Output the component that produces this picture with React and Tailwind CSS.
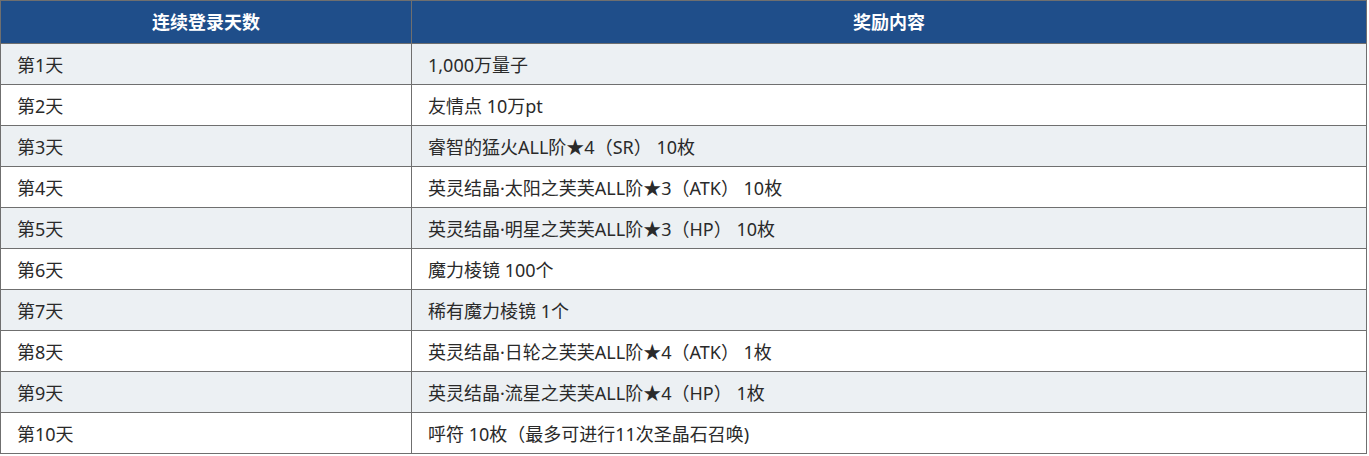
export default function App() {
  const rows = [
    ["第1天", "1,000万量子"],
    ["第2天", "友情点 10万pt"],
    ["第3天", "睿智的猛火ALL阶★4（SR） 10枚"],
    ["第4天", "英灵结晶·太阳之芙芙ALL阶★3（ATK） 10枚"],
    ["第5天", "英灵结晶·明星之芙芙ALL阶★3（HP） 10枚"],
    ["第6天", "魔力棱镜 100个"],
    ["第7天", "稀有魔力棱镜 1个"],
    ["第8天", "英灵结晶·日轮之芙芙ALL阶★4（ATK） 1枚"],
    ["第9天", "英灵结晶·流星之芙芙ALL阶★4（HP） 1枚"],
    ["第10天", "呼符 10枚（最多可进行11次圣晶石召唤)"],
  ];
  return (
    <div className="bg-white w-[1369px] h-[456px]" style={{ fontFamily: '"Noto Sans", "Noto Sans CJK SC", sans-serif' }}>
      <table className="w-[1367px] border-collapse border border-[#6f6f6f] table-fixed">
        <colgroup>
          <col className="w-[411px]" />
          <col />
        </colgroup>
        <thead>
          <tr className="h-[43px] bg-[#1f4e8a]">
            <th className="border border-[#6f6f6f] text-white font-bold text-[18px] text-center p-0">连续登录天数</th>
            <th className="border border-[#6f6f6f] text-white font-bold text-[18px] text-center p-0">奖励内容</th>
          </tr>
        </thead>
        <tbody>
          {rows.map((r, i) => (
            <tr key={i} className={i % 2 === 0 ? "h-[41px] bg-[#ecf0f3]" : "h-[41px] bg-white"}>
              <td className="border border-[#6f6f6f] px-4 pt-[1px] pb-0 text-[18px] leading-6 text-[#2a2a2a] whitespace-pre">{r[0]}</td>
              <td className="border border-[#6f6f6f] px-4 pt-[1px] pb-0 text-[18px] leading-6 text-[#2a2a2a] whitespace-pre">{r[1]}</td>
            </tr>
          ))}
        </tbody>
      </table>
    </div>
  );
}
